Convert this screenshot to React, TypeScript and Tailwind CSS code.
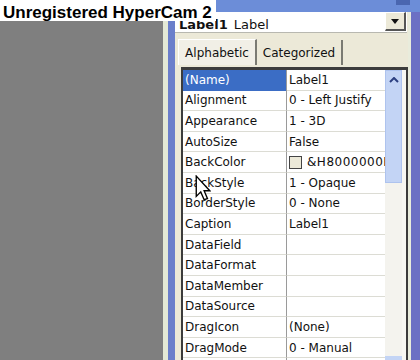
import React from "react";

const rows: [string, string][] = [
  ["(Name)", "Label1"],
  ["Alignment", "0 - Left Justify"],
  ["Appearance", "1 - 3D"],
  ["AutoSize", "False"],
  ["BackColor", "&H8000000F"],
  ["BackStyle", "1 - Opaque"],
  ["BorderStyle", "0 - None"],
  ["Caption", "Label1"],
  ["DataField", ""],
  ["DataFormat", ""],
  ["DataMember", ""],
  ["DataSource", ""],
  ["DragIcon", "(None)"],
  ["DragMode", "0 - Manual"],
  ["Enabled", "True"],
];

const font = { fontFamily: '"DejaVu Sans", Verdana, sans-serif' };

export default function App() {
  return (
    <div className="relative w-[420px] h-[360px] overflow-hidden bg-[#7f7f7f] flex" style={font}>
      <div className="w-[163px] shrink-0" />
      <div className="flex-1 flex flex-col min-h-0">
        <div className="h-[12px] shrink-0 bg-[#6c8dd8] flex justify-end">
          <div className="w-[14px] h-[5px] bg-[#4a66b0] mr-[10px]" />
        </div>
        <div className="flex-1 flex min-h-0">
          <div className="w-[5px] bg-[#e4e9d6]" />
          <div className="w-[7px] bg-[#6b7fcb]" />
          <div className="flex-1 bg-[#ece9d8] flex flex-col min-h-0">
            {/* combo */}
            <div className="h-[21px] shrink-0 flex items-end bg-white border-b border-[#b8b8b0] mr-[1px]">
              <div className="flex-1 pl-[4px] pb-[1px] text-[13px] text-[#111] leading-none whitespace-nowrap">
                <span className="font-bold">Label1</span>
                <span className="ml-[6px]">Label</span>
              </div>
              <div className="w-[21px] h-[19px] mr-[1px] mb-[1px] bg-[#ece9d8] border-r-2 border-b-2 border-[#555] border-l border-t border-l-white border-t-white flex items-center justify-center">
                <svg width="8" height="5" viewBox="0 0 8 5">
                  <path d="M0 0 L8 0 L4 5 Z" fill="#111" />
                </svg>
              </div>
            </div>
            {/* tabs */}
            <div className="h-[32px] shrink-0 flex items-end pl-[3px]">
              <div className="h-[26px] w-[79px] bg-[#f1efe6] border-t border-l border-white border-r-2 border-r-[#7a7a72] flex items-center justify-center text-[12px] text-[#111]">
                Alphabetic
              </div>
              <div className="h-[25px] w-[86px] border-r-2 border-[#7a7a72] flex items-center justify-center text-[12px] text-[#111]">
                Categorized
              </div>
            </div>
            {/* grid */}
            <div className="mt-[2px] ml-[6px] flex-1 min-h-0 overflow-hidden border-t-[3px] border-l-2 border-r-2 border-[#3c3c3c] bg-white flex">
              <div className="w-[202px] flex flex-col">
                {rows.map(([n, v], i) => (
                  <div key={n} className="h-[20.6px] shrink-0 flex text-[12px] text-[#111] leading-none">
                    <div
                      className={
                        i === 0
                          ? "w-[104px] shrink-0 bg-[#3b6dc5] text-white flex items-center pl-[2px] border-r border-[#9a9a9a]"
                          : "w-[104px] shrink-0 flex items-center pl-[2px] border-r border-b border-r-[#9a9a9a] border-b-[#dcdcd4]"
                      }
                    >
                      {n}
                    </div>
                    <div className="flex-1 min-w-0 flex items-center pl-[2px] border-b border-[#dcdcd4] overflow-hidden whitespace-nowrap">
                      {n === "BackColor" && (
                        <span className="w-[13px] h-[13px] border border-[#444] bg-[#ece9d8] mr-[5px] shrink-0" />
                      )}
                      <span className={n === "BackColor" ? "tracking-[0.5px]" : ""}>{v}</span>
                    </div>
                  </div>
                ))}
              </div>
              <div className="w-[17px] shrink-0 flex flex-col">
                <div className="h-[113px] shrink-0 bg-[#c3d4f5] border border-[#aec3ee] flex justify-center pt-[6px]">
                  <svg width="10" height="6" viewBox="0 0 10 6">
                    <path d="M1 5 L5 1 L9 5" stroke="#2c3f80" strokeWidth="2" fill="none" />
                  </svg>
                </div>
                <div className="flex-1 bg-[#f4f3ee]" />
                <div className="h-[4px] shrink-0 bg-[#c3d4f5]" />
              </div>
              <div className="flex-1 bg-[#f7f7f2]" />
            </div>
          </div>
          <div className="w-[3px] bg-[#e9ecdc]" />
          <div className="w-[9px] bg-[#6c70c4]" />
        </div>
      </div>

      {/* HyperCam overlay */}
      <div className="absolute left-0 top-0 h-[21px] w-[216px] bg-white pl-[3px] flex items-start pt-[4px]">
        <span
          className="text-[17px] font-bold text-black leading-none whitespace-nowrap"
          style={{ fontFamily: '"Liberation Sans", Arial, sans-serif' }}
        >
          Unregistered HyperCam 2
        </span>
      </div>

      {/* mouse cursor */}
      <svg className="absolute left-[195px] top-[175px]" width="16" height="27" viewBox="0 0 14 24">
        <path
          d="M1 1 L1 19 L5 15 L8 22 L11 21 L8 14 L13 14 Z"
          fill="white"
          stroke="black"
          strokeWidth="1.2"
          strokeLinejoin="miter"
        />
      </svg>
    </div>
  );
}
